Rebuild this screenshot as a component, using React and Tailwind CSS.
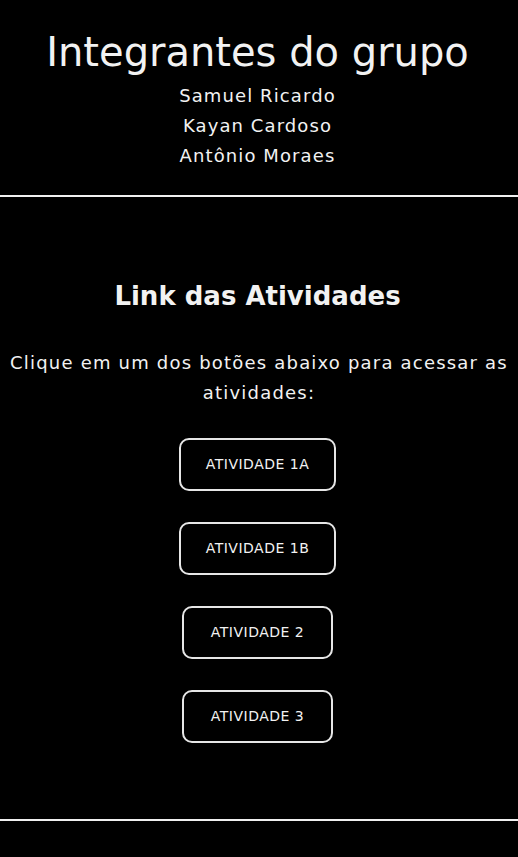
export default function App() {
  const btns = [
    { label: "ATIVIDADE 1A", w: "w-[157px]" },
    { label: "ATIVIDADE 1B", w: "w-[157px]" },
    { label: "ATIVIDADE 2", w: "w-[151px]" },
    { label: "ATIVIDADE 3", w: "w-[151px]" },
  ];
  return (
    <div className="min-h-[857px] bg-black text-[#f2f2f2] font-['DejaVu_Sans',sans-serif]">
      <header className="flex flex-col items-center pt-[28px] pb-[24px] pr-[3px] border-b-2 border-[#f0f0f0]">
        <h1 className="text-[40px] leading-[48px] mb-[5px]">Integrantes do grupo</h1>
        <p className="text-[18px] leading-[30px] tracking-[1.1px]">Samuel Ricardo</p>
        <p className="text-[18px] leading-[30px] tracking-[1.1px]">Kayan Cardoso</p>
        <p className="text-[18px] leading-[30px] tracking-[1.1px]">Antônio Moraes</p>
      </header>
      <main className="flex flex-col items-center pt-[81px] pb-[76px] border-b-2 border-[#f0f0f0]">
        <h2 className="text-[26px] leading-[36px] font-semibold pr-[3px]">Link das Atividades</h2>
        <p className="mt-[34px] px-[4px] text-center text-[18px] leading-[30px] tracking-[1.2px]">
          Clique em um dos botões abaixo para acessar as atividades:
        </p>
        <div className="mt-[30px] pr-[3px] flex flex-col items-center gap-[31px]">
          {btns.map((b) => (
            <a
              key={b.label}
              href="#"
              className={`${b.w} h-[53px] flex items-center justify-center rounded-[10px] border-2 border-[#e6e6e6] text-[14px] tracking-[0.5px] text-[#f2f2f2]`}
            >
              {b.label}
            </a>
          ))}
        </div>
      </main>
    </div>
  );
}
